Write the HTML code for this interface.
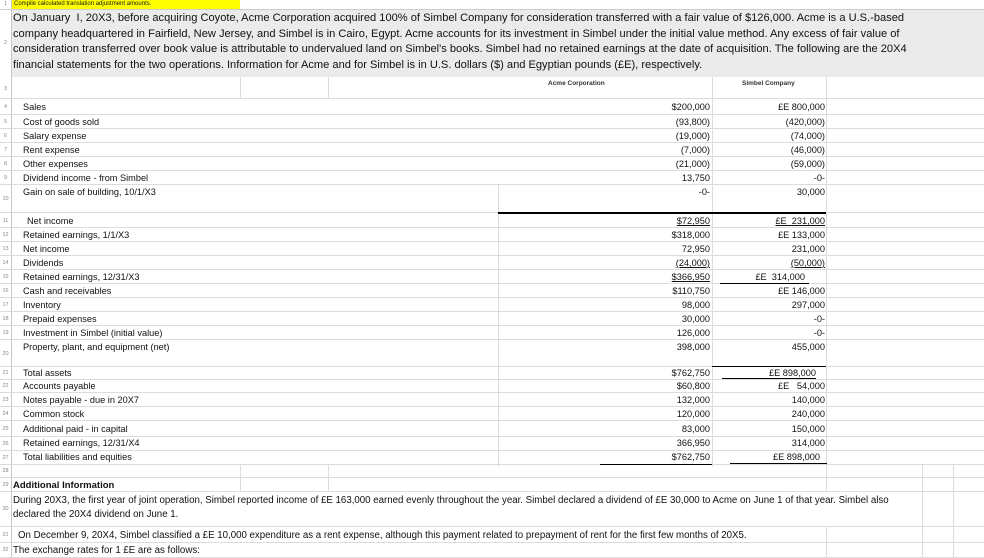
<!DOCTYPE html>
<html><head><meta charset="utf-8"><style>
*{margin:0;padding:0;box-sizing:border-box}
body{width:984px;height:558px;overflow:hidden;background:#fff;font-family:"Liberation Sans",sans-serif;color:#111;position:relative}
.r{position:absolute;left:0;width:984px;border-bottom:1px solid #dcdcdc}
.n{position:absolute;left:0;width:11px;font-size:5.5px;color:#888;text-align:center}
.l{position:absolute;left:23px;font-size:9.2px;white-space:nowrap}
.a{position:absolute;right:274px;font-size:9.2px;white-space:nowrap;text-align:right}
.b{position:absolute;right:159px;font-size:9.2px;white-space:nowrap;text-align:right}
.u{text-decoration:underline}
.v{position:absolute;width:1px;background:#dcdcdc}
.k{position:absolute;height:1px;background:#000}
</style></head><body>
<div style="position:absolute;left:11px;top:0;width:1px;height:558px;background:#c8c8c8"></div>
<div style="position:absolute;left:12px;top:0;width:228px;height:10px;background:#ffff00"></div>
<div style="position:absolute;left:14px;top:1px;font-size:6px;white-space:nowrap">Compile calculated translation adjustment amounts.</div>
<div class="n" style="top:1px">1</div>
<div class="r" style="top:0;height:10px;border-bottom-color:#ccc"></div>
<div style="position:absolute;left:12px;top:10px;width:972px;height:67px;background:#ebebeb"></div>
<div style="position:absolute;left:13px;top:11px;width:970px;font-size:11.1px;line-height:15.6px;letter-spacing:0px;white-space:nowrap">On January &nbsp;I, 20X3, before acquiring Coyote, Acme Corporation acquired 100% of Simbel Company for consideration transferred with a fair value of $126,000. Acme is a U.S.-based<br>company headquartered in Fairfield, New Jersey, and Simbel is in Cairo, Egypt. Acme accounts for its investment in Simbel under the initial value method. Any excess of fair value of<br>consideration transferred over book value is attributable to undervalued land on Simbel's books. Simbel had no retained earnings at the date of acquisition. The following are the 20X4<br>financial statements for the two operations. Information for Acme and for Simbel is in U.S. dollars ($) and Egyptian pounds (£E), respectively.</div>
<div class="n" style="top:40px">2</div>
<div class="r" style="top:77px;height:22px"></div>
<div class="n" style="top:86px">3</div>
<div style="position:absolute;left:548px;top:80px;font-size:6.5px;font-weight:bold;color:#333">Acme Corporation</div>
<div style="position:absolute;left:742px;top:80px;font-size:6.5px;font-weight:bold;color:#333">Simbel Company</div>
<div class="v" style="left:240px;top:77px;height:22px"></div>
<div class="v" style="left:328px;top:77px;height:22px"></div>
<div class="v" style="left:712px;top:77px;height:390px"></div>
<div class="v" style="left:826px;top:77px;height:415px"></div>
<div class="v" style="left:826px;top:527px;height:31px"></div>
<div class="v" style="left:498px;top:185px;height:282px"></div>
<div class="v" style="left:240px;top:465px;height:27px"></div>
<div class="v" style="left:328px;top:465px;height:27px"></div>
<div class="v" style="left:922px;top:465px;height:93px"></div>
<div class="v" style="left:953px;top:465px;height:93px"></div>

<div class="r" style="top:99px;height:16px"></div><div class="n" style="top:104px">4</div><div class="l" style="top:102px">Sales</div><div class="a" style="top:102px">$200,000</div><div class="b" style="top:102px">£E 800,000</div>
<div class="r" style="top:115px;height:14px"></div><div class="n" style="top:119px">5</div><div class="l" style="top:117px">Cost of goods sold</div><div class="a" style="top:117px">(93,800)</div><div class="b" style="top:117px">(420,000)</div>
<div class="r" style="top:129px;height:14px"></div><div class="n" style="top:133px">6</div><div class="l" style="top:131px">Salary expense</div><div class="a" style="top:131px">(19,000)</div><div class="b" style="top:131px">(74,000)</div>
<div class="r" style="top:143px;height:14px"></div><div class="n" style="top:147px">7</div><div class="l" style="top:145px">Rent expense</div><div class="a" style="top:145px">(7,000)</div><div class="b" style="top:145px">(46,000)</div>
<div class="r" style="top:157px;height:14px"></div><div class="n" style="top:161px">8</div><div class="l" style="top:159px">Other expenses</div><div class="a" style="top:159px">(21,000)</div><div class="b" style="top:159px">(59,000)</div>
<div class="r" style="top:171px;height:14px"></div><div class="n" style="top:175px">9</div><div class="l" style="top:173px">Dividend income - from Simbel</div><div class="a" style="top:173px">13,750</div><div class="b" style="top:173px">-0-</div>
<div class="r" style="top:185px;height:28px"></div><div class="n" style="top:196px">10</div><div class="l" style="top:187px">Gain on sale of building, 10/1/X3</div><div class="a" style="top:187px">-0-</div><div class="b" style="top:187px">30,000</div>
<div class="k" style="left:498px;top:212px;width:328px;height:1.5px"></div>
<div class="r" style="top:213px;height:15px"></div><div class="n" style="top:218px">11</div><div class="l" style="top:216px;left:27px">Net income</div><div class="a u" style="top:216px">$72,950</div><div class="b u" style="top:216px">£E&nbsp; 231,000</div>
<div class="r" style="top:228px;height:14px"></div><div class="n" style="top:232px">12</div><div class="l" style="top:230px">Retained earnings, 1/1/X3</div><div class="a" style="top:230px">$318,000</div><div class="b" style="top:230px">£E 133,000</div>
<div class="r" style="top:242px;height:14px"></div><div class="n" style="top:246px">13</div><div class="l" style="top:244px">Net income</div><div class="a" style="top:244px">72,950</div><div class="b" style="top:244px">231,000</div>
<div class="r" style="top:256px;height:14px"></div><div class="n" style="top:260px">14</div><div class="l" style="top:258px">Dividends</div><div class="a u" style="top:258px">(24,000)</div><div class="b u" style="top:258px">(50,000)</div>
<div class="r" style="top:270px;height:14px"></div><div class="n" style="top:274px">15</div><div class="l" style="top:272px">Retained earnings, 12/31/X3</div><div class="a u" style="top:272px">$366,950</div><div class="b" style="top:272px;right:179px">£E&nbsp; 314,000</div><div class="k" style="left:720px;top:283px;width:89px"></div>
<div class="r" style="top:284px;height:14px"></div><div class="n" style="top:288px">16</div><div class="l" style="top:286px">Cash and receivables</div><div class="a" style="top:286px">$110,750</div><div class="b" style="top:286px">£E 146,000</div>
<div class="r" style="top:298px;height:14px"></div><div class="n" style="top:302px">17</div><div class="l" style="top:300px">Inventory</div><div class="a" style="top:300px">98,000</div><div class="b" style="top:300px">297,000</div>
<div class="r" style="top:312px;height:14px"></div><div class="n" style="top:316px">18</div><div class="l" style="top:314px">Prepaid expenses</div><div class="a" style="top:314px">30,000</div><div class="b" style="top:314px">-0-</div>
<div class="r" style="top:326px;height:14px"></div><div class="n" style="top:330px">19</div><div class="l" style="top:328px">Investment in Simbel (initial value)</div><div class="a" style="top:328px">126,000</div><div class="b" style="top:328px">-0-</div>
<div class="r" style="top:340px;height:27px"></div><div class="n" style="top:351px">20</div><div class="l" style="top:342px">Property, plant, and equipment (net)</div><div class="a" style="top:342px">398,000</div><div class="b" style="top:342px">455,000</div>
<div class="k" style="left:712px;top:366px;width:114px"></div>
<div class="r" style="top:367px;height:13px"></div><div class="n" style="top:370px">21</div><div class="l" style="top:368px">Total assets</div><div class="a" style="top:368px">$762,750</div><div class="b" style="top:368px;right:168px">£E 898,000</div><div class="k" style="left:722px;top:378px;width:94px"></div>
<div class="r" style="top:380px;height:13px"></div><div class="n" style="top:383px">22</div><div class="l" style="top:381px">Accounts payable</div><div class="a" style="top:381px">$60,800</div><div class="b" style="top:381px">£E &nbsp;&nbsp;54,000</div>
<div class="r" style="top:393px;height:14px"></div><div class="n" style="top:397px">23</div><div class="l" style="top:395px">Notes payable - due in 20X7</div><div class="a" style="top:395px">132,000</div><div class="b" style="top:395px">140,000</div>
<div class="r" style="top:407px;height:14px"></div><div class="n" style="top:411px">24</div><div class="l" style="top:409px">Common stock</div><div class="a" style="top:409px">120,000</div><div class="b" style="top:409px">240,000</div>
<div class="r" style="top:421px;height:16px"></div><div class="n" style="top:426px">25</div><div class="l" style="top:424px">Additional paid - in capital</div><div class="a" style="top:424px">83,000</div><div class="b" style="top:424px">150,000</div>
<div class="r" style="top:437px;height:14px"></div><div class="n" style="top:441px">26</div><div class="l" style="top:438px">Retained earnings, 12/31/X4</div><div class="a" style="top:438px">366,950</div><div class="b" style="top:438px">314,000</div>
<div class="r" style="top:451px;height:14px"></div><div class="n" style="top:455px">27</div><div class="l" style="top:452px">Total liabilities and equities</div><div class="a" style="top:452px">$762,750</div><div class="b" style="top:452px;right:164px">£E 898,000</div>
<div class="k" style="left:600px;top:464px;width:112px"></div><div class="k" style="left:730px;top:463px;width:97px"></div>
<div class="r" style="top:465px;height:13px"></div><div class="n" style="top:468px">28</div>
<div class="r" style="top:478px;height:14px"></div><div class="n" style="top:482px">29</div><div class="l" style="top:480px;left:13px;font-weight:bold;font-size:9.5px">Additional Information</div>
<div class="r" style="top:492px;height:35px"></div><div class="n" style="top:506px">30</div>
<div style="position:absolute;left:13px;top:494px;width:960px;font-size:9.7px;line-height:14px;white-space:nowrap">During 20X3, the first year of joint operation, Simbel reported income of £E 163,000 earned evenly throughout the year. Simbel declared a dividend of £E 30,000 to Acme on June 1 of that year. Simbel also<br>declared the 20X4 dividend on June 1.</div>
<div class="r" style="top:527px;height:16px"></div><div class="n" style="top:532px">31</div><div class="l" style="top:530px;left:18px;font-size:9.7px">On December 9, 20X4, Simbel classified a £E 10,000 expenditure as a rent expense, although this payment related to prepayment of rent for the first few months of 20X5.</div>
<div class="r" style="top:543px;height:15px"></div><div class="n" style="top:547px">32</div><div class="l" style="top:545px;left:13px;font-size:9.7px">The exchange rates for 1 £E are as follows:</div>
</body></html>
